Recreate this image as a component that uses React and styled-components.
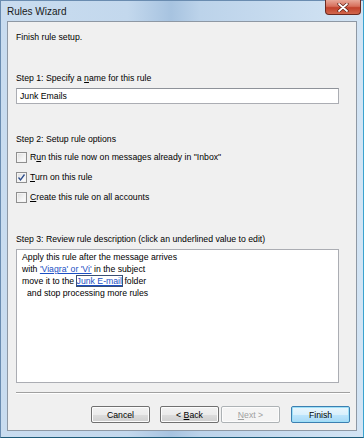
import React from "react";
import styled, { createGlobalStyle } from "styled-components";

const GlobalStyle = createGlobalStyle`
  html, body {
    margin: 0;
    padding: 0;
    background: #ffffff;
  }
  * {
    box-sizing: border-box;
  }
`;

const Window = styled.div`
  width: 364px;
  height: 438px;
  display: flex;
  flex-direction: column;
  padding: 0 6px 6px 6px;
  background: linear-gradient(
    to right,
    #c9dcef 0%,
    #c3d8ed 35%,
    #a7c3e0 47%,
    #bcd3ea 55%,
    #d3e4f4 100%
  );
  border: 1px solid #6a8cb0;
  border-bottom-color: #1e5a78;
  border-right-color: #3aa3cf;
  font-family: "Liberation Sans", Arial, sans-serif;
  font-size: 8.7px;
  color: #000;
`;

const TitleBar = styled.div`
  height: 20px;
  display: flex;
  align-items: flex-start;
  justify-content: space-between;
`;

const Title = styled.span`
  padding-top: 5px;
  font-size: 10px;
  color: #1a1a1a;
`;

const CloseButton = styled.div`
  width: 36px;
  height: 15px;
  margin-top: -1px;
  margin-right: -4px;
  border: 1px solid #6b2a20;
  border-top: none;
  border-radius: 0 0 4px 4px;
  background: linear-gradient(to bottom, #e8a898 0%, #d7705c 45%, #c1412b 55%, #d2684e 100%);
  display: flex;
  align-items: center;
  justify-content: center;
`;

const Content = styled.div`
  flex: 1;
  display: flex;
  flex-direction: column;
  background: #f0f0f0;
  border: 1px solid #8e98a4;
  padding: 9px 8px 0 8px;
`;

const Label = styled.div`
  height: 12px;
  line-height: 12px;
  margin-top: ${(p) => p.$top || 0}px;
  white-space: nowrap;
`;

const Key = styled.span`
  text-decoration: underline;
`;

const TextInput = styled.div`
  width: 323px;
  height: 16px;
  margin-top: 4px;
  background: #fff;
  border: 1px solid #abadb3;
  border-top-color: #8e9299;
  padding-left: 3px;
  line-height: 14px;
`;

const CheckRow = styled.div`
  height: 20px;
  display: flex;
  align-items: center;
  gap: 3px;
  margin-top: ${(p) => p.$top || 0}px;
`;

const Box = styled.span`
  width: 11px;
  height: 11px;
  border: 1px solid #8f8f8f;
  background: linear-gradient(135deg, #dcdcdc 0%, #f4f4f4 60%, #ffffff 100%);
  box-shadow: inset 0 0 0 1px #f4f4f4;
  display: flex;
  align-items: center;
  justify-content: center;
`;

const Description = styled.div`
  width: 323px;
  height: 134px;
  margin-top: 4px;
  background: #fff;
  border: 1px solid #abadb3;
  padding: 1px 0 0 5px;
`;

const DescLine = styled.div`
  height: 12px;
  line-height: 12px;
  white-space: nowrap;
  padding-left: ${(p) => p.$indent || 0}px;
`;

const Link = styled.span`
  color: #1b4fc4;
  text-decoration: underline;
  ${(p) => (p.$focus ? "outline: 1px solid #3a4f74; outline-offset: 0px;" : "")}
`;

const Separator = styled.div`
  width: 334px;
  height: 2px;
  margin-top: 9px;
  border-top: 1px solid #a0a0a0;
  border-bottom: 1px solid #ffffff;
`;

const Footer = styled.div`
  width: 334px;
  display: flex;
  justify-content: flex-end;
  margin-top: 12px;
`;

const Button = styled.div`
  width: 59px;
  height: 17px;
  margin-left: ${(p) => p.$gap || 0}px;
  border-radius: 2px;
  display: flex;
  align-items: center;
  justify-content: center;
  white-space: pre;
  border: 1px solid ${(p) => (p.$default ? "#3c7fb1" : p.$disabled ? "#adb2b5" : "#707070")};
  background: ${(p) =>
    p.$disabled
      ? "#f4f4f4"
      : p.$default
      ? "linear-gradient(to bottom, #eaf6fd 0%, #d9f0fc 50%, #bee6fd 51%, #a7d9f5 100%)"
      : "linear-gradient(to bottom, #f2f2f2 0%, #ebebeb 50%, #dddddd 51%, #cfcfcf 100%)"};
  box-shadow: ${(p) => (p.$default ? "inset 0 0 0 1px #9de0f8" : "inset 0 0 0 1px #fcfcfc")};
  color: ${(p) => (p.$disabled ? "#a0a0a0" : "#000")};
`;

const Check = () => (
  <svg width="9" height="9" viewBox="0 0 9 9">
    <path d="M1.5 4.5 L3.5 7 L7.5 1.5" fill="none" stroke="#2d4d8c" strokeWidth="1.3" />
  </svg>
);

const CloseX = () => (
  <svg width="12" height="9" viewBox="0 0 12 9">
    <path d="M2 1 L10 8 M10 1 L2 8" stroke="#5a1e14" strokeWidth="3.2" strokeLinecap="round" />
    <path d="M2 1 L10 8 M10 1 L2 8" stroke="#ffffff" strokeWidth="1.8" strokeLinecap="round" />
  </svg>
);

export default function App() {
  return (
    <>
      <GlobalStyle />
      <Window>
        <TitleBar>
          <Title>Rules Wizard</Title>
          <CloseButton>
            <CloseX />
          </CloseButton>
        </TitleBar>
        <Content>
          <Label>Finish rule setup.</Label>

          <Label $top={29}>
            Step 1: Specify a <Key>n</Key>ame for this rule
          </Label>
          <TextInput>Junk Emails</TextInput>

          <Label $top={29}>Step 2: Setup rule options</Label>
          <CheckRow $top={2}>
            <Box />
            <span>
              R<Key>u</Key>n this rule now on messages already in "Inbox"
            </span>
          </CheckRow>
          <CheckRow>
            <Box>
              <Check />
            </Box>
            <span>
              <Key>T</Key>urn on this rule
            </span>
          </CheckRow>
          <CheckRow>
            <Box />
            <span>
              <Key>C</Key>reate this rule on all accounts
            </span>
          </CheckRow>

          <Label $top={26}>
            Step 3: Review rule description (click an underlined value to edit)
          </Label>
          <Description>
            <DescLine>Apply this rule after the message arrives</DescLine>
            <DescLine>
              with <Link>'Viagra' or 'Vi'</Link> in the subject
            </DescLine>
            <DescLine>
              move it to the <Link $focus>Junk E-mail</Link> folder
            </DescLine>
            <DescLine $indent={5}>and stop processing more rules</DescLine>
          </Description>

          <Separator />
          <Footer>
            <Button>Cancel</Button>
            <Button $gap={10}>
              <span>
                &lt; <Key>B</Key>ack
              </span>
            </Button>
            <Button $gap={2} $disabled>
              <span>
                <Key>N</Key>ext &gt;
              </span>
            </Button>
            <Button $gap={11} $default>
              Finish
            </Button>
          </Footer>
        </Content>
      </Window>
    </>
  );
}
